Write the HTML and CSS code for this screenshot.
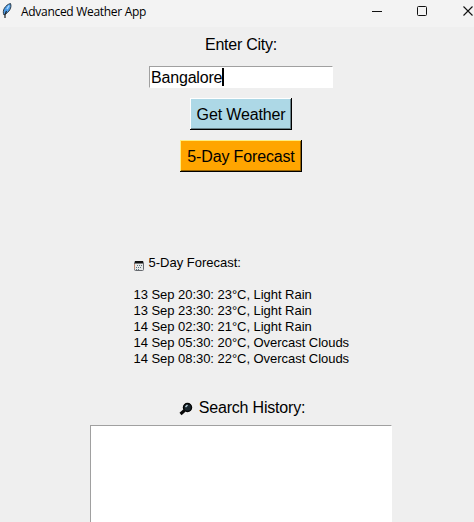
FILE: index.html
```html
<!DOCTYPE html>
<html lang="en">
<head>
<meta charset="utf-8">
<title>Advanced Weather App</title>
<link rel="stylesheet" href="styles.css">
</head>
<body>
<header class="titlebar">
  <svg class="feather" width="12" height="18" viewBox="0 0 12 18"><path d="M3 13C.8 9 4 3 9.500 1.500c1.500 4-1 8.500-6.500 11.500z" fill="#4a9be8" stroke="#2b3a48" stroke-width="1"/><path d="M8 3.500 6 7" stroke="#a9d8ff" stroke-width="1.500"/><path d="M5.500 9 4 12.500V16" fill="none" stroke="#222" stroke-width="1.200"/></svg>
  <h1 class="title"><span>Advanced Weather App</span></h1>
  <svg class="controls" width="110" height="24" viewBox="0 0 110 24" fill="none" stroke="#111"><path d="M8 11.500h10"/><rect x="53.500" y="6.500" width="9" height="9" rx="1"/><path d="m99.500 6.500 9 9m0-9-9 9" stroke-width="1.100"/></svg>
</header>
<main class="content">
  <div class="label">Enter City:</div>
  <div class="entry"><span>Bangalore</span><i class="caret"></i></div>
  <button class="btn weather"><span>Get Weather</span></button>
  <button class="btn forecast"><span>5-Day Forecast</span></button>
  <section class="report">
    <div class="line heading"><svg class="calendar" width="10" height="10" viewBox="0 0 10 10"><rect x=".5" y=".5" width="9" height="9" rx="1" fill="#e6e8e8" stroke="#66696e"/><path d="M1 0h8v2.500H1z" fill="#111"/><path d="M3 4.500h5M2 6.500h6M2 8.500h4" stroke="#5f747e" stroke-dasharray="1 1"/><path d="M.5 3v5" stroke="#c08a72"/></svg><span>5-Day Forecast:</span></div>
    <div class="line blank"></div>
    <div class="line">13 Sep 20:30: 23°C, Light Rain</div>
    <div class="line">13 Sep 23:30: 23°C, Light Rain</div>
    <div class="line">14 Sep 02:30: 21°C, Light Rain</div>
    <div class="line">14 Sep 05:30: 20°C, Overcast Clouds</div>
    <div class="line">14 Sep 08:30: 22°C, Overcast Clouds</div>
  </section>
  <div class="history"><svg class="search" width="14" height="14" viewBox="0 0 14 14"><path d="m1.500 12 4-3.500" stroke="#080808" stroke-width="3"/><circle cx="8.500" cy="5.500" r="4" fill="#1a262e" stroke="#050505" stroke-width="1.500"/><path d="M6.500 5 8.500 3" stroke="#b8ccd6" stroke-width="1.400"/></svg><span>Search History:</span></div>
  <div class="listbox"></div>
</main>
</body>
</html>
```
FILE: styles.css
```css
* { box-sizing: border-box; }
body { margin: 0; width: 474px; height: 522px; overflow: hidden; background: #efefef; color: #000; font-family: "Liberation Sans", Arial, sans-serif; }
svg { display: block; flex: none; }
.titlebar { display: flex; height: 27px; background: #f3f3f3; }
.feather { margin: 2px 0 0 1px; }
.title { flex: 1; margin: 0 0 0 8px; font: 400 12px/24px "Open Sans", sans-serif; letter-spacing: -.3px; white-space: nowrap; }
.content { display: flex; flex-direction: column; align-items: center; width: 482px; height: 495px; }
.label { margin-top: 7px; height: 22px; font-size: 16px; line-height: 22px; letter-spacing: -.25px; }
.entry { display: flex; flex: none; margin-top: 10px; width: 184px; height: 22px; border: 1px solid #fff; border-top-color: #a0a0a0; border-left-color: #a0a0a0; background: #fff; padding-left: 1px; font-size: 16px; line-height: 21px; letter-spacing: -.18px; }
.caret { width: 2px; height: 18px; margin-top: 1px; background: #000; }
.btn { flex: none; height: 32px; margin: 10px 0 0; padding: 2px 0 0; border: 0; color: #000; font: 16px/30px "Liberation Sans", Arial, sans-serif; letter-spacing: -.15px; white-space: nowrap; }
.weather { width: 102px; background: #add8e6; box-shadow: inset -1px -1px #000, inset 1px 1px #fff, inset -2px -2px #68828a; }
.forecast { width: 122px; background: #ffa500; box-shadow: inset -1px -1px #000, inset 1px 1px #ffed80, inset -2px -2px #996300; }
.report { width: 216px; margin-top: 83px; padding-left: .5px; font-size: 13px; line-height: 16px; letter-spacing: -.04px; }
.line { height: 16px; white-space: nowrap; }
.heading { display: flex; letter-spacing: 0; }
.calendar { margin: 6px 4.500px 0 .5px; }
.history { display: flex; margin-top: 30px; height: 22px; font-size: 16px; line-height: 22px; letter-spacing: -.2px; }
.search { margin: 5px 6px 0 2px; }
.listbox { flex: none; width: 302px; height: 120px; margin-top: 6px; border: 1px solid #fff; border-top-color: #a0a0a0; border-left-color: #a0a0a0; background: #fff; }
```
